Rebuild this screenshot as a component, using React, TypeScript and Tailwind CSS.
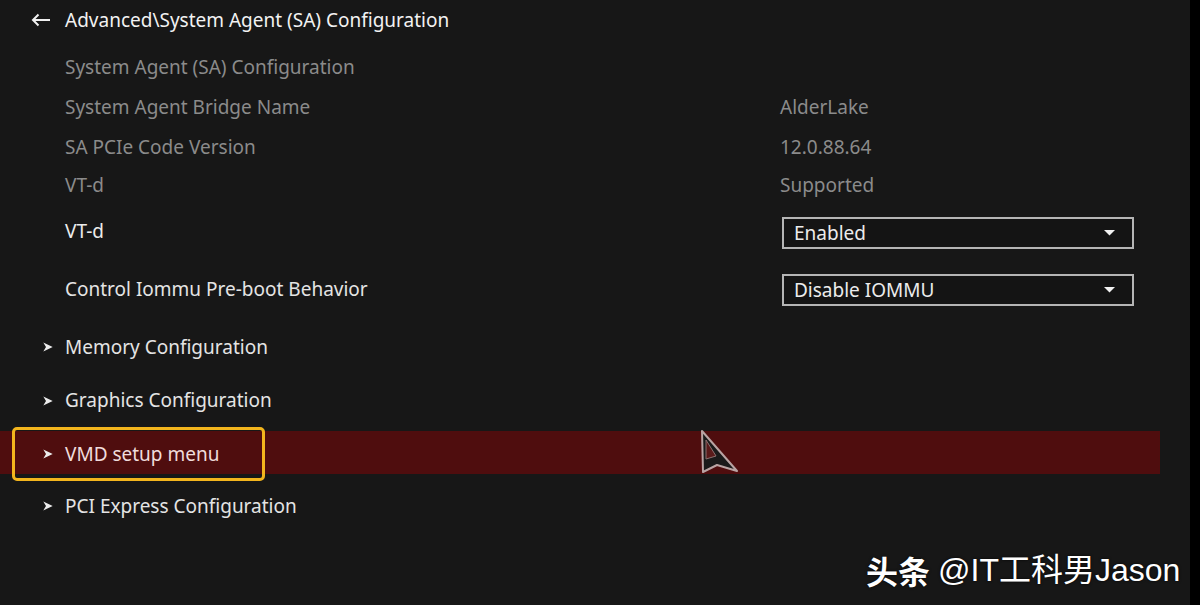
import React from "react";

const Chevron = () => (
  <svg width="10" height="10" viewBox="0 0 10 10" className="shrink-0">
    <path d="M0.3 0.6 L9.7 5 L0.3 9.4 L3 5 Z" fill="#ececec" />
  </svg>
);

const Dropdown = ({ value }: { value: string }) => (
  <div className="ml-auto mr-[56px] flex h-[32px] w-[352px] items-center justify-between border-2 border-[#b5b5b5] bg-[#141414] pl-[10px] pr-[17px] text-[#ececec]">
    <span>{value}</span>
    <svg width="11" height="6" viewBox="0 0 11 6">
      <path d="M0 0 L11 0 L5.5 5.5 Z" fill="#f2f2f2" />
    </svg>
  </div>
);

export default function App() {
  return (
    <div
      className="relative flex h-[605px] w-[1200px] overflow-hidden bg-[#000]"
      style={{ fontFamily: '"Noto Sans", "Open Sans", sans-serif' }}
    >
      <div className="relative flex h-full w-[1190px] flex-col bg-[#171717] text-[19px]">
        {/* header */}
        <div className="flex h-[40px] items-center pl-[31px] text-[#f2f2f2]">
          <svg width="20" height="14" viewBox="0 0 20 14" className="mr-[14px]">
            <path d="M19 7 H2 M7.5 1.5 L2 7 L7.5 12.5" stroke="#f0f0f0" strokeWidth="2" fill="none" />
          </svg>
          <span>Advanced\System Agent (SA) Configuration</span>
        </div>
        <div className="h-[8px]" />
        <div className="flex h-[39px] items-center pl-[65px] text-[#8b8b8b]">System Agent (SA) Configuration</div>
        <div className="flex h-[41px] items-center pl-[65px] text-[#8b8b8b]">
          <span className="w-[715px]">System Agent Bridge Name</span>
          <span>AlderLake</span>
        </div>
        <div className="flex h-[38px] items-center pl-[65px] text-[#8b8b8b]">
          <span className="w-[715px]">SA PCIe Code Version</span>
          <span>12.0.88.64</span>
        </div>
        <div className="flex h-[38px] items-center pl-[65px] text-[#8b8b8b]">
          <span className="w-[715px]">VT-d</span>
          <span>Supported</span>
        </div>
        <div className="h-[4px]" />
        <div className="flex h-[50px] items-center pl-[65px] text-[#ececec]">
          <span className="-mt-[4px]">VT-d</span>
          <Dropdown value="Enabled" />
        </div>
        <div className="h-[4px]" />
        <div className="flex h-[56px] items-center pl-[65px] text-[#e4e4e4]">
          <span className="-mt-[2px]">Control Iommu Pre-boot Behavior</span>
          <Dropdown value="Disable IOMMU" />
        </div>
        <div className="h-[2px]" />
        <div className="flex h-[54px] items-center gap-[12px] pl-[43px] text-[#e4e4e4]">
          <Chevron />
          <span>Memory Configuration</span>
        </div>
        <div className="flex h-[53px] items-center gap-[12px] pl-[43px] text-[#e4e4e4]">
          <Chevron />
          <span>Graphics Configuration</span>
        </div>
        <div className="relative flex h-[54px] items-center">
          <div className="absolute left-0 top-[4px] h-[43px] w-[1160px] bg-[#4f0d0e]" />
          <div className="relative ml-[12px] flex h-[54px] w-[253px] items-center gap-[12px] rounded-[5px] border-[3px] border-[#f3b51d] pl-[28px] text-[#f0dcdc]">
            <Chevron />
            <span>VMD setup menu</span>
          </div>
        </div>
        <div className="flex h-[50px] items-center gap-[12px] pl-[43px] text-[#e4e4e4]">
          <Chevron />
          <span>PCI Express Configuration</span>
        </div>

        {/* cursor */}
        <svg
          className="absolute left-[698px] top-[428px]"
          width="42"
          height="46"
          viewBox="0 0 42 46"
        >
          <path d="M4 3 L39 43 L19 37 L5 44 Z" fill="#1a1a1a" stroke="#b9a3a3" strokeWidth="2" strokeLinejoin="round" />
          <path d="M8 12 L18 28 L8 31 Z" fill="#5a1a1a" stroke="#8a7070" strokeWidth="1" />
        </svg>

        {/* watermark */}
        <div
          className="absolute left-[866px] top-[550px] flex items-center text-[32px] leading-[40px] text-white"
          style={{ textShadow: "0 0 3px rgba(0,0,0,0.8)" }}
        >
          <span
            className="font-bold"
            style={{ fontFamily: '"Noto Sans CJK SC", sans-serif' }}
          >
            头条
          </span>
          <span
            className="ml-[8px]"
            style={{ fontFamily: '"Liberation Sans", "Noto Sans CJK SC", sans-serif' }}
          >
            @IT工科男Jason
          </span>
        </div>
      </div>
    </div>
  );
}
